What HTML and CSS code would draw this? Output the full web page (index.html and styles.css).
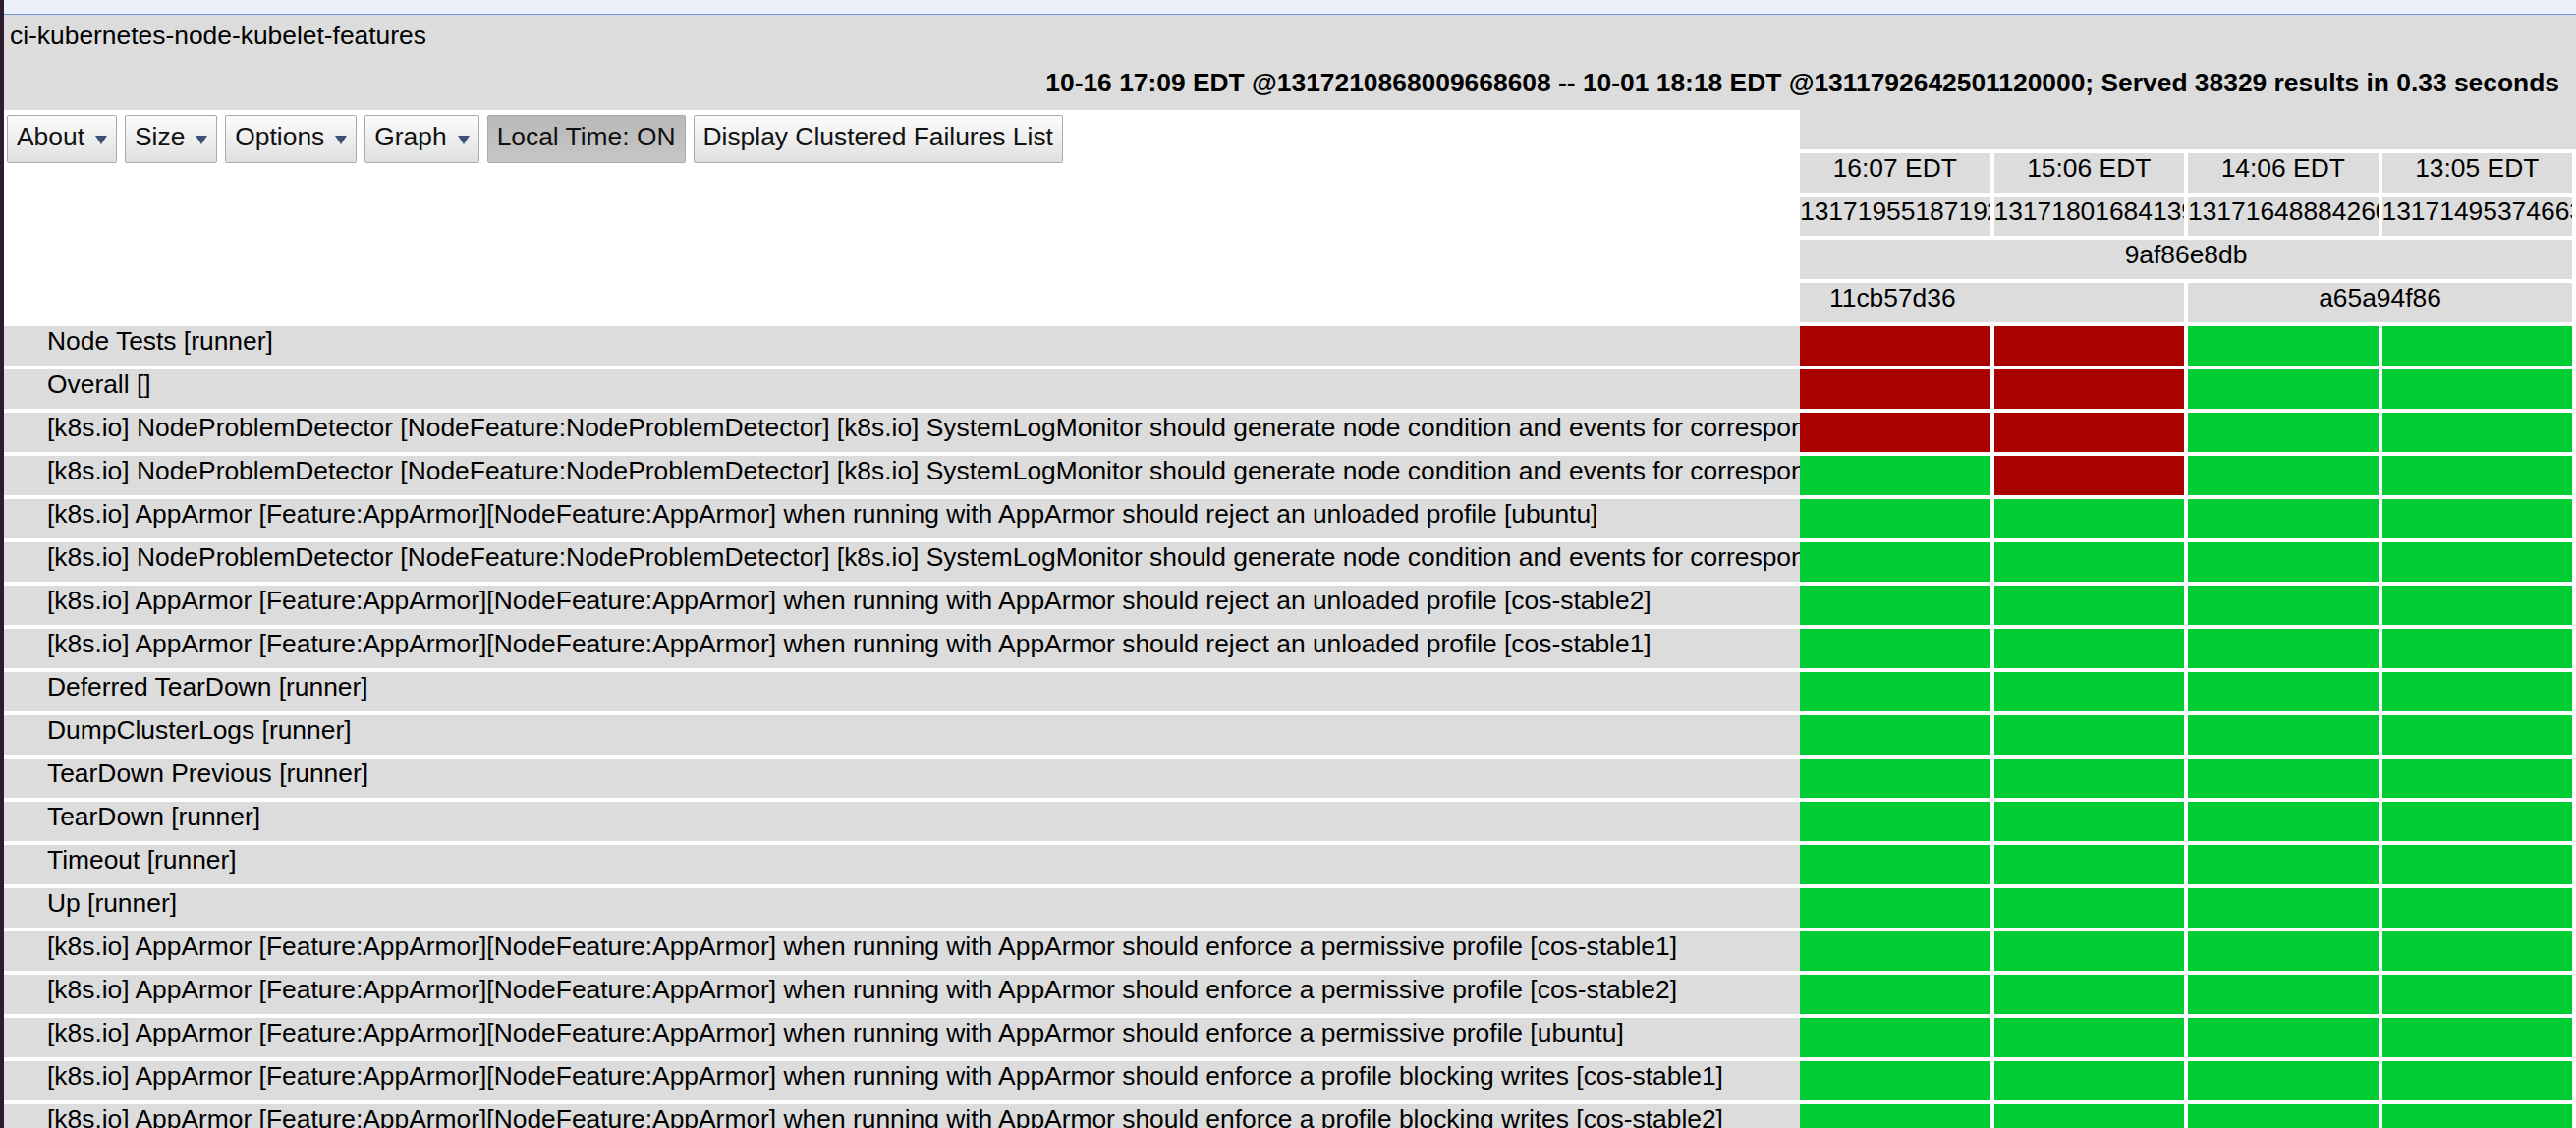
FILE: index.html
```html
<!DOCTYPE html>
<html>
<head>
<meta charset="utf-8">
<title>ci-kubernetes-node-kubelet-features</title>
<link rel="stylesheet" href="styles.css">
</head>
<body>
<div class="edge"></div>
<div class="main">
  <div class="topbar"></div>
  <div class="header">
    <div class="title">ci-kubernetes-node-kubelet-features</div>
    <div class="info">10-16 17:09 EDT @1317210868009668608 -- 10-01 18:18 EDT @1311792642501120000; Served 38329 results in 0.33 seconds</div>
  </div>
  <div class="head-grid">
    <div class="toolbar">
      <span class="btn">About<span class="tri"></span></span>
      <span class="btn">Size<span class="tri"></span></span>
      <span class="btn">Options<span class="tri"></span></span>
      <span class="btn">Graph<span class="tri"></span></span>
      <span class="btn on">Local Time: ON</span>
      <span class="btn">Display Clustered Failures List</span>
    </div>
    <div class="hcols">
      <div class="hspacer"></div>
      <div class="hrow">
        <div class="hcell">16:07 EDT</div>
        <div class="hcell">15:06 EDT</div>
        <div class="hcell">14:06 EDT</div>
        <div class="hcell">13:05 EDT</div>
      </div>
      <div class="hrow">
        <div class="hcell">1317195518719262720</div>
        <div class="hcell">1317180168413974528</div>
        <div class="hcell">1317164888426024960</div>
        <div class="hcell">1317149537466372096</div>
      </div>
      <div class="hrow">
        <div class="hcell">9af86e8db</div>
      </div>
      <div class="hrow">
        <div class="hcell left">11cb57d36</div>
        <div class="hcell">a65a94f86</div>
      </div>
    </div>
  </div>
  <div class="rows">
    <div class="row"><div class="name">Node Tests [runner]</div><div class="cells"><div class="c r"></div><div class="c r"></div><div class="c g"></div><div class="c g"></div></div></div>
    <div class="row"><div class="name">Overall []</div><div class="cells"><div class="c r"></div><div class="c r"></div><div class="c g"></div><div class="c g"></div></div></div>
    <div class="row"><div class="name">[k8s.io] NodeProblemDetector [NodeFeature:NodeProblemDetector] [k8s.io] SystemLogMonitor should generate node condition and events for corresponding errors [ubuntu]</div><div class="cells"><div class="c r"></div><div class="c r"></div><div class="c g"></div><div class="c g"></div></div></div>
    <div class="row"><div class="name">[k8s.io] NodeProblemDetector [NodeFeature:NodeProblemDetector] [k8s.io] SystemLogMonitor should generate node condition and events for corresponding errors [cos-stable2]</div><div class="cells"><div class="c g"></div><div class="c r"></div><div class="c g"></div><div class="c g"></div></div></div>
    <div class="row"><div class="name">[k8s.io] AppArmor [Feature:AppArmor][NodeFeature:AppArmor] when running with AppArmor should reject an unloaded profile [ubuntu]</div><div class="cells"><div class="c g"></div><div class="c g"></div><div class="c g"></div><div class="c g"></div></div></div>
    <div class="row"><div class="name">[k8s.io] NodeProblemDetector [NodeFeature:NodeProblemDetector] [k8s.io] SystemLogMonitor should generate node condition and events for corresponding errors [cos-stable1]</div><div class="cells"><div class="c g"></div><div class="c g"></div><div class="c g"></div><div class="c g"></div></div></div>
    <div class="row"><div class="name">[k8s.io] AppArmor [Feature:AppArmor][NodeFeature:AppArmor] when running with AppArmor should reject an unloaded profile [cos-stable2]</div><div class="cells"><div class="c g"></div><div class="c g"></div><div class="c g"></div><div class="c g"></div></div></div>
    <div class="row"><div class="name">[k8s.io] AppArmor [Feature:AppArmor][NodeFeature:AppArmor] when running with AppArmor should reject an unloaded profile [cos-stable1]</div><div class="cells"><div class="c g"></div><div class="c g"></div><div class="c g"></div><div class="c g"></div></div></div>
    <div class="row"><div class="name">Deferred TearDown [runner]</div><div class="cells"><div class="c g"></div><div class="c g"></div><div class="c g"></div><div class="c g"></div></div></div>
    <div class="row"><div class="name">DumpClusterLogs [runner]</div><div class="cells"><div class="c g"></div><div class="c g"></div><div class="c g"></div><div class="c g"></div></div></div>
    <div class="row"><div class="name">TearDown Previous [runner]</div><div class="cells"><div class="c g"></div><div class="c g"></div><div class="c g"></div><div class="c g"></div></div></div>
    <div class="row"><div class="name">TearDown [runner]</div><div class="cells"><div class="c g"></div><div class="c g"></div><div class="c g"></div><div class="c g"></div></div></div>
    <div class="row"><div class="name">Timeout [runner]</div><div class="cells"><div class="c g"></div><div class="c g"></div><div class="c g"></div><div class="c g"></div></div></div>
    <div class="row"><div class="name">Up [runner]</div><div class="cells"><div class="c g"></div><div class="c g"></div><div class="c g"></div><div class="c g"></div></div></div>
    <div class="row"><div class="name">[k8s.io] AppArmor [Feature:AppArmor][NodeFeature:AppArmor] when running with AppArmor should enforce a permissive profile [cos-stable1]</div><div class="cells"><div class="c g"></div><div class="c g"></div><div class="c g"></div><div class="c g"></div></div></div>
    <div class="row"><div class="name">[k8s.io] AppArmor [Feature:AppArmor][NodeFeature:AppArmor] when running with AppArmor should enforce a permissive profile [cos-stable2]</div><div class="cells"><div class="c g"></div><div class="c g"></div><div class="c g"></div><div class="c g"></div></div></div>
    <div class="row"><div class="name">[k8s.io] AppArmor [Feature:AppArmor][NodeFeature:AppArmor] when running with AppArmor should enforce a permissive profile [ubuntu]</div><div class="cells"><div class="c g"></div><div class="c g"></div><div class="c g"></div><div class="c g"></div></div></div>
    <div class="row"><div class="name">[k8s.io] AppArmor [Feature:AppArmor][NodeFeature:AppArmor] when running with AppArmor should enforce a profile blocking writes [cos-stable1]</div><div class="cells"><div class="c g"></div><div class="c g"></div><div class="c g"></div><div class="c g"></div></div></div>
    <div class="row"><div class="name">[k8s.io] AppArmor [Feature:AppArmor][NodeFeature:AppArmor] when running with AppArmor should enforce a profile blocking writes [cos-stable2]</div><div class="cells"><div class="c g"></div><div class="c g"></div><div class="c g"></div><div class="c g"></div></div></div>
  </div>
</div>
</body>
</html>
```
FILE: styles.css
```css
html, body {
  margin: 0;
  padding: 0;
  overflow: hidden;
  background: #fff;
}
body {
  display: flex;
  font-family: "Liberation Sans", Arial, sans-serif;
  font-size: 26.4px;
  color: #000;
}
.edge {
  flex: none;
  width: 4px;
  background: #2d1c2d;
}
.main {
  flex: 1;
  min-width: 0;
}
.topbar {
  height: 14px;
  background: #ebf0fa;
  border-bottom: 1px solid #6d95e0;
}
.header {
  background: #dcdcdc;
  padding: 6px 17px 13px 6px;
}
.title {
  line-height: 30px;
  white-space: nowrap;
}
.info {
  line-height: 30px;
  margin-top: 18px;
  text-align: right;
  font-weight: bold;
  white-space: nowrap;
}
.head-grid {
  display: flex;
}
.toolbar {
  flex: none;
  width: 1828px;
  box-sizing: border-box;
  padding: 5px 0 0 3px;
  display: flex;
  gap: 8px;
  align-items: flex-start;
  background: #fff;
}
.btn {
  display: block;
  white-space: nowrap;
  border: 1px solid #a9a9a9;
  border-radius: 2px;
  background: linear-gradient(#fcfcfc, #e0e0e0);
  padding: 3px 9px 8px;
  line-height: 36px;
  color: #111;
}
.btn.on {
  background: linear-gradient(#b8b8b8, #c6c6c6);
}
.tri {
  display: inline-block;
  width: 0;
  height: 0;
  border-left: 6.5px solid transparent;
  border-right: 6.5px solid transparent;
  border-top: 9px solid #3f5078;
  margin-left: 11px;
  margin-bottom: 1px;
  vertical-align: baseline;
}
.hcols {
  flex: 1 1 0;
  min-width: 0;
  overflow: hidden;
  display: flex;
  flex-direction: column;
  gap: 4px;
}
.hspacer {
  height: 40px;
  background: #dcdcdc;
}
.hrow {
  display: flex;
  gap: 4px;
  margin-right: 4px;
  min-width: 0;
}
.hcell {
  flex: 1 1 0;
  min-width: 0;
  height: 40px;
  background: #dcdcdc;
  line-height: 30px;
  text-align: center;
  white-space: nowrap;
  overflow: hidden;
}
.hcell.left {
  text-align: left;
  text-indent: 30px;
}
.rows {
  display: flex;
  flex-direction: column;
  gap: 4px;
  margin-top: 4px;
}
.row {
  display: flex;
  height: 40px;
}
.name {
  flex: none;
  width: 1828px;
  box-sizing: border-box;
  padding-left: 44px;
  background: #dcdcdc;
  line-height: 30px;
  white-space: nowrap;
  overflow: hidden;
}
.cells {
  flex: 1;
  display: flex;
  gap: 4px;
  margin-right: 4px;
}
.c {
  flex: 1 1 0;
}
.g {
  background: #00cc33;
}
.r {
  background: #aa0000;
}
```
